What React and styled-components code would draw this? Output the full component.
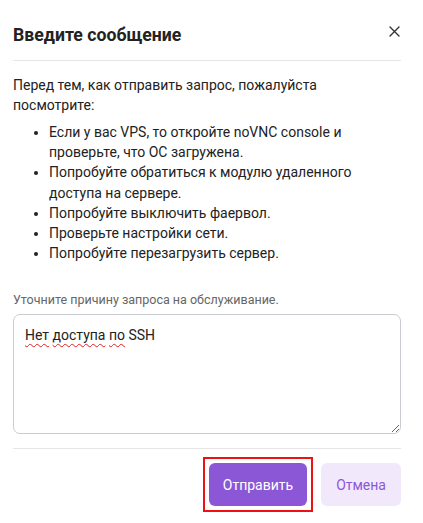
import styled, { createGlobalStyle } from "styled-components";

const COLORS = {
  text: "#222222",
  muted: "#666666",
  line: "#e6e6e6",
  border: "#c9ccd1",
  primary: "#8c57d6",
  soft: "#f1e9fb",
};

const GlobalStyle = createGlobalStyle`
  body {
    margin: 0;
    background: #ffffff;
    font-family: Roboto, "Liberation Sans", sans-serif;
    color: ${COLORS.text};
  }
`;

const Modal = styled.div`
  width: 423px;
  height: 523px;
  box-sizing: border-box;
  padding: 0 22px 0 13px;
  display: flex;
  flex-direction: column;
  background: #fff;
`;

const Header = styled.div`
  display: flex;
  justify-content: space-between;
  align-items: flex-start;
  padding: 23px 0 13px;
  border-bottom: 1px solid ${COLORS.line};
`;

const Title = styled.h2`
  margin: 0;
  font-size: 17.7px;
  line-height: 24px;
  font-weight: 700;
  color: ${COLORS.text};
`;

const CloseButton = styled.button`
  border: none;
  background: none;
  padding: 0;
  margin: 0 -1px 0 0;
  width: 16px;
  height: 16px;
  display: flex;
  align-items: center;
  justify-content: center;
  color: #333;
  cursor: pointer;
`;

const Body = styled.div`
  padding-top: 14px;
  font-size: 14px;
  line-height: 20px;
`;

const Note = styled.p`
  margin: 0;
`;

const List = styled.ul`
  margin: 7px 0 0;
  padding-left: 36px;
  line-height: 20.2px;
`;

const Field = styled.div`
  margin-top: 29px;
  display: flex;
  flex-direction: column;
  gap: 6px;
`;

const Label = styled.label`
  font-size: 12.5px;
  line-height: 16px;
  color: ${COLORS.muted};
`;

const TextBox = styled.div`
  height: 120px;
  box-sizing: border-box;
  border: 1px solid ${COLORS.border};
  border-radius: 7px;
  padding: 10px 11px;
  font-size: 14px;
  line-height: 20px;
  color: ${COLORS.text};
  overflow: auto;
  resize: vertical;
  outline: none;
`;

const Misspelled = styled.span`
  text-decoration: underline wavy #e02020;
  text-decoration-thickness: 1px;
  text-underline-offset: 3px;
`;

const Footer = styled.div`
  margin-top: 14px;
  border-top: 1px solid ${COLORS.line};
  padding-top: 8px;
  display: flex;
  justify-content: flex-end;
  align-items: center;
  gap: 8px;
`;

const FocusRing = styled.span`
  display: flex;
  padding: 4px;
  border: 2px solid #ee1111;
`;

const Button = styled.button`
  height: 43px;
  padding: 0 ${(p) => (p.$primary ? "14px" : "15px")};
  border: none;
  border-radius: 6px;
  font-family: inherit;
  font-size: 14px;
  background: ${(p) => (p.$primary ? COLORS.primary : COLORS.soft)};
  color: ${(p) => (p.$primary ? "#ffffff" : COLORS.primary)};
  cursor: pointer;
`;

export default function App() {
  return (
    <>
      <GlobalStyle />
      <Modal>
        <Header>
          <Title>Введите сообщение</Title>
          <CloseButton aria-label="Закрыть">
            <svg width="11" height="11" viewBox="0 0 11 11">
              <path
                d="M1 1L10 10M10 1L1 10"
                stroke="currentColor"
                strokeWidth="1.4"
                strokeLinecap="round"
              />
            </svg>
          </CloseButton>
        </Header>
        <Body>
          <Note>Перед тем, как отправить запрос, пожалуйста посмотрите:</Note>
          <List>
            <li>Если у вас VPS, то откройте noVNC console и проверьте, что ОС загружена.</li>
            <li>Попробуйте обратиться к модулю удаленного доступа на сервере.</li>
            <li>Попробуйте выключить фаервол.</li>
            <li>Проверьте настройки сети.</li>
            <li>Попробуйте перезагрузить сервер.</li>
          </List>
          <Field>
            <Label>Уточните причину запроса на обслуживание.</Label>
            <TextBox role="textbox" aria-multiline="true">
              <Misspelled>Нет</Misspelled> <Misspelled>доступа</Misspelled>{" "}
              <Misspelled>по</Misspelled> SSH
            </TextBox>
          </Field>
        </Body>
        <Footer>
          <FocusRing>
            <Button $primary>Отправить</Button>
          </FocusRing>
          <Button>Отмена</Button>
        </Footer>
      </Modal>
    </>
  );
}
